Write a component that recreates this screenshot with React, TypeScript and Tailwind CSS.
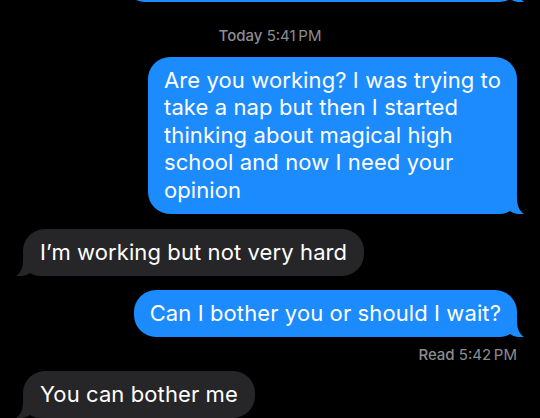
import React from "react";

const font = { fontFamily: "Inter, 'Noto Sans', sans-serif" };

function Tail({ side, color }: { side: "left" | "right"; color: string }) {
  return (
    <svg
      width="30"
      height="20"
      viewBox="0 0 30 20"
      className={
        side === "right"
          ? "absolute bottom-0 right-[-7px]"
          : "absolute bottom-0 left-[-7px] -scale-x-100"
      }
    >
      <path
        d="M0 0 H23 V4 C23 12 25.5 17 30 20 C25 20.8 19.5 19.5 16 17 C12.5 19.5 8 20 3 20 H0 Z"
        fill={color}
      />
    </svg>
  );
}

function Sent({ children }: { children: React.ReactNode }) {
  return (
    <div className="self-end relative">
      <div className="relative z-10 bg-[#1b8bfe] text-white rounded-[22px] px-[16px] py-[10px] text-[22px] leading-[27.5px] tracking-[0.1px]">
        {children}
      </div>
      <Tail side="right" color="#1b8bfe" />
    </div>
  );
}

function Received({ children }: { children: React.ReactNode }) {
  return (
    <div className="self-start relative">
      <div className="relative z-10 bg-[#262628] text-white rounded-[22px] px-[17px] py-[10px] text-[22px] leading-[27.5px] tracking-[0.1px]">
        {children}
      </div>
      <Tail side="left" color="#262628" />
    </div>
  );
}

export default function App() {
  return (
    <div
      className="w-[540px] h-[418px] overflow-hidden bg-black flex flex-col px-[23px]"
      style={font}
    >
      {/* tail end of the previous bubble */}
      <div className="self-end relative w-[394px] h-[24px] -mt-[22px]">
        <div className="relative z-10 h-full bg-[#1b8bfe] rounded-b-[22px]" />
        <Tail side="right" color="#1b8bfe" />
      </div>

      <p className="mt-[25px] text-center text-[15px] leading-[18px] text-[#8d8d92]">
        <span className="font-medium">Today</span> 5:41&#8201;PM
      </p>

      <div className="mt-[12px] flex flex-col">
        <Sent>
          Are you working? I was trying to
          <br />
          take a nap but then I started
          <br />
          thinking about magical high
          <br />
          school and now I need your
          <br />
          opinion
        </Sent>
      </div>

      <div className="mt-[14.5px] flex flex-col">
        <Received>I’m working but not very hard</Received>
      </div>

      <div className="mt-[13.5px] flex flex-col">
        <Sent>Can I bother you or should I wait?</Sent>
      </div>

      <p className="mt-[8.5px] self-end text-[15px] leading-[18px] text-[#8d8d92]">
        <span className="font-medium">Read</span> 5:42&#8201;PM
      </p>

      <div className="mt-[7px] flex flex-col">
        <Received>You can bother me</Received>
      </div>
    </div>
  );
}
